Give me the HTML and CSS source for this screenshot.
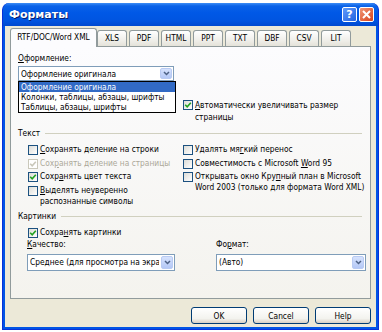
FILE: index.html
```html
<!DOCTYPE html>
<html lang="ru">
<head>
    <meta charset="UTF-8">
    <title>Форматы</title>
    <link rel="stylesheet" href="styles.css">
</head>
<body>

<div class="window">
    <!-- Title bar -->
    <div class="titlebar">
        <span class="title">Форматы</span>
        <div class="caption-buttons">
            <span class="cap-btn cap-help">?</span>
            <span class="cap-btn cap-close">
                <svg width="9" height="9" viewBox="0 0 9 9"><path d="M1 1 L8 8 M8 1 L1 8" stroke="#fff" stroke-width="2"/></svg>
            </span>
        </div>
    </div>

    <div class="client">
        <!-- Tabs -->
        <div class="tabs">
            <div class="tab active">RTF/DOC/Word XML</div>
            <div class="tab">XLS</div>
            <div class="tab">PDF</div>
            <div class="tab">HTML</div>
            <div class="tab">PPT</div>
            <div class="tab">TXT</div>
            <div class="tab">DBF</div>
            <div class="tab">CSV</div>
            <div class="tab">LIT</div>
        </div>

        <div class="panel">
            <div class="top">
                <div class="field">
                    <div class="label"><u>О</u>формление:</div>
                    <div class="select">
                        <span class="select-text">Оформление оригинала</span>
                        <span class="drop-btn">
                            <svg width="7" height="5" viewBox="0 0 7 5"><path d="M1 1 L3.5 3.5 L6 1" fill="none" stroke="#4d6185" stroke-width="1.5"/></svg>
                        </span>
                        <ul class="droplist">
                            <li class="selected">Оформление оригинала</li>
                            <li>Колонки, таблицы, абзацы, шрифты</li>
                            <li>Таблицы, абзацы, шрифты</li>
                        </ul>
                    </div>
                </div>
                <div class="check auto">
                    <span class="box on"><svg width="8" height="8" viewBox="0 0 8 8"><path d="M1.2 3.8 L3.2 5.8 L6.8 1.8" fill="none" stroke="#21a121" stroke-width="1.6"/></svg></span>
                    <span><u>А</u>втоматически увеличивать размер<br>страницы</span>
                </div>
            </div>

            <div class="group">Текст</div>
            <div class="cols">
                <div class="col">
                    <div class="check">
                        <span class="box"></span>
                        <span><u>С</u>охранять деление на строки</span>
                    </div>
                    <div class="check disabled">
                        <span class="box on"><svg width="8" height="8" viewBox="0 0 8 8"><path d="M1.2 3.8 L3.2 5.8 L6.8 1.8" fill="none" stroke="#c9c7ba" stroke-width="1.6"/></svg></span>
                        <span>Сох<u>р</u>анять деление на страницы</span>
                    </div>
                    <div class="check">
                        <span class="box on"><svg width="8" height="8" viewBox="0 0 8 8"><path d="M1.2 3.8 L3.2 5.8 L6.8 1.8" fill="none" stroke="#21a121" stroke-width="1.6"/></svg></span>
                        <span>Сохр<u>а</u>нять цвет текста</span>
                    </div>
                    <div class="check">
                        <span class="box"></span>
                        <span><u>В</u>ыделять неуверенно<br>распознанные символы</span>
                    </div>
                </div>
                <div class="col">
                    <div class="check">
                        <span class="box"></span>
                        <span>Удалять мя<u>г</u>кий перенос</span>
                    </div>
                    <div class="check">
                        <span class="box"></span>
                        <span>Совместимость с Microsoft <u>W</u>ord 95</span>
                    </div>
                    <div class="check">
                        <span class="box"></span>
                        <span>Открывать окно Кру<u>п</u>ный план в Microsoft<br>Word 2003 (только для формата Word XML)</span>
                    </div>
                </div>
            </div>

            <div class="group">Картинки</div>
            <div class="check pics">
                <span class="box on"><svg width="8" height="8" viewBox="0 0 8 8"><path d="M1.2 3.8 L3.2 5.8 L6.8 1.8" fill="none" stroke="#21a121" stroke-width="1.6"/></svg></span>
                <span>Сохра<u>н</u>ять картинки</span>
            </div>
            <div class="pic-fields">
                <div class="field">
                    <div class="label"><u>К</u>ачество:</div>
                    <div class="select tall">
                        <span class="select-text">Среднее (для просмотра на экран</span>
                        <span class="drop-btn">
                            <svg width="7" height="5" viewBox="0 0 7 5"><path d="M1 1 L3.5 3.5 L6 1" fill="none" stroke="#4d6185" stroke-width="1.5"/></svg>
                        </span>
                    </div>
                </div>
                <div class="field">
                    <div class="label">Фо<u>р</u>мат:</div>
                    <div class="select tall">
                        <span class="select-text">(Авто)</span>
                        <span class="drop-btn">
                            <svg width="7" height="5" viewBox="0 0 7 5"><path d="M1 1 L3.5 3.5 L6 1" fill="none" stroke="#4d6185" stroke-width="1.5"/></svg>
                        </span>
                    </div>
                </div>
            </div>
        </div>

        <!-- Dialog buttons -->
        <div class="buttons">
            <button class="btn">OK</button>
            <button class="btn">Cancel</button>
            <button class="btn">Help</button>
        </div>
    </div>
</div>

</body>
</html>
```

FILE: styles.css
```css
* {
    box-sizing: border-box;
}

body {
    margin: 3px 0 0 2px;
    background-color: #fff;
    font-family: "DejaVu Sans Condensed", "DejaVu Sans", sans-serif;
    font-stretch: condensed;
    font-size: 8.3px;
    color: #000;
}

u {
    text-decoration-thickness: 1px;
    text-underline-offset: 1px;
}

/* Window frame */
.window {
    width: 377px;
    height: 327px;
    display: flex;
    flex-direction: column;
    background-color: #0055e5;
    border: 1px solid #0831d9;
    border-top: none;
    border-radius: 7px 7px 0 0;
    padding: 0 2px 2px;
}

.titlebar {
    height: 23px;
    margin: 0 -2px;
    padding: 0 4px 0 6px;
    display: flex;
    align-items: center;
    border-radius: 7px 7px 0 0;
    background: linear-gradient(#3d8df5 0, #0a62e8 3px, #0058e6 10px, #0054e0 18px, #0049cf 23px);
}

.title {
    font-family: "DejaVu Sans", sans-serif;
    font-stretch: normal;
    font-weight: bold;
    font-size: 11px;
    color: #fff;
    text-shadow: 1px 1px 0 #0a1e6e;
}

.caption-buttons {
    margin-left: auto;
    display: flex;
    gap: 2px;
}

.cap-btn {
    width: 15px;
    height: 15px;
    border: 1px solid #fff;
    border-radius: 2px;
    display: flex;
    align-items: center;
    justify-content: center;
    color: #fff;
    font-family: "DejaVu Sans", sans-serif;
    font-stretch: normal;
    font-weight: bold;
    font-size: 11px;
}

.cap-help {
    background: linear-gradient(135deg, #5f9bfb, #2463e0);
}

.cap-close {
    background: linear-gradient(135deg, #f09877, #d8401a);
}

/* Client area */
.client {
    flex: 1;
    display: flex;
    flex-direction: column;
    background-color: #ece9d8;
    padding-top: 2px;
}

.tabs {
    height: 18px;
    display: flex;
    align-items: flex-end;
    padding-left: 5px;
    position: relative;
    z-index: 1;
}

.tab {
    height: 16px;
    width: 30px;
    margin-left: 2px;
    line-height: 15px;
    text-align: center;
    white-space: nowrap;
    border: 1px solid #919b9c;
    border-bottom: none;
    border-radius: 3px 3px 0 0;
    background: linear-gradient(#ffffff, #f0efea 60%, #e4e2d9);
}

.tab.active {
    height: 19px;
    width: 87px;
    margin: 0 0 -1px 0;
    line-height: 17px;
    background: #fcfcfe;
}

.tab.active + .tab {
    margin-left: 0;
}

.panel {
    height: 253px;
    margin: 0 5px;
    border: 1px solid #919b9c;
    background: linear-gradient(#fcfcfe, #f4f3ee);
    padding: 6px 8px 0 7px;
}

.label {
    line-height: 11px;
    height: 11px;
    margin-bottom: 2px;
}

/* Dropdowns */
.select {
    position: relative;
    height: 15px;
    display: flex;
    align-items: center;
    border: 1px solid #7f9db9;
    background-color: #fff;
    padding: 0 1px 0 2px;
}

.select.tall {
    height: 17px;
}

.select-text {
    flex: 1;
    white-space: nowrap;
    overflow: hidden;
}

.drop-btn {
    flex: none;
    width: 12px;
    height: 11px;
    margin-left: 2px;
    border: 1px solid #b9cbf3;
    border-radius: 2px;
    background: linear-gradient(#d6e2fd, #b4c8f6);
    display: flex;
    align-items: center;
    justify-content: center;
}

.select.tall .drop-btn {
    height: 13px;
}

.droplist {
    position: absolute;
    left: -1px;
    top: 14px;
    width: 158px;
    margin: 0;
    padding: 0;
    list-style: none;
    border: 1px solid #000;
    background-color: #fff;
}

.droplist li {
    height: 10px;
    line-height: 10px;
    padding-left: 2px;
    white-space: nowrap;
}

.droplist li.selected {
    background-color: #316ac5;
    color: #fff;
}

.top {
    display: grid;
    grid-template-columns: 156px 1fr;
    column-gap: 9px;
}

.top .field {
    grid-column: 1;
    grid-row: 1;
}

.check.auto {
    grid-column: 2;
    grid-row: 2;
    margin-top: 18px;
    line-height: 12px;
}

/* Checkboxes */
.check {
    display: flex;
    align-items: flex-start;
    gap: 2px;
    line-height: 11px;
    white-space: nowrap;
}

.box {
    flex: none;
    width: 10px;
    height: 10px;
    margin-top: 1px;
    border: 1px solid #1c5180;
    background: linear-gradient(135deg, #dcdcd7, #ffffff);
    display: flex;
    align-items: center;
    justify-content: center;
}

.check.disabled {
    color: #aca899;
}

.check.disabled .box {
    border-color: #cac8bb;
    background: #fff;
}

/* Group headers */
.group {
    display: flex;
    align-items: center;
    gap: 5px;
    line-height: 11px;
    margin-top: 5px;
}

.group::after {
    content: "";
    flex: 1;
    border-top: 1px solid #d0d0bf;
}

.cols {
    display: grid;
    grid-template-columns: 155px 1fr;
    margin: 5px 0 0 10px;
}

.col {
    display: flex;
    flex-direction: column;
    gap: 2.5px;
}

.cols + .group {
    margin-top: 4px;
}

.check.pics {
    margin: 5px 0 0 10px;
}

.pic-fields {
    display: grid;
    grid-template-columns: 148px 150px;
    column-gap: 41px;
    margin: 1px 0 0 9px;
}

.pic-fields .label {
    margin-bottom: 4px;
}

/* Dialog buttons */
.buttons {
    display: flex;
    justify-content: flex-end;
    gap: 6px;
    margin: 8px 5px 0;
}

.btn {
    width: 56px;
    height: 17px;
    padding: 0;
    border: 1px solid #003c74;
    border-radius: 3px;
    background: linear-gradient(#ffffff, #f3f3ee 70%, #d6d0c5);
    font-family: inherit;
    font-stretch: condensed;
    font-size: 8.3px;
    color: #000;
}
```
